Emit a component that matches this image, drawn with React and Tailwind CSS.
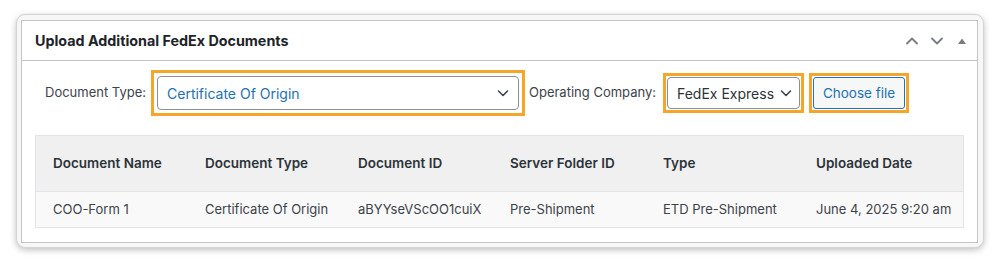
import React from 'react';

const cols = [
  { key: 'name', label: 'Document Name', w: 'w-[152px]' },
  { key: 'type', label: 'Document Type', w: 'w-[153px]' },
  { key: 'id', label: 'Document ID', w: 'w-[152px]' },
  { key: 'folder', label: 'Server Folder ID', w: 'w-[153px]' },
  { key: 'kind', label: 'Type', w: 'w-[153px]' },
  { key: 'date', label: 'Uploaded Date', w: 'flex-1' },
];

const rows = [
  {
    name: 'COO-Form 1',
    type: 'Certificate Of Origin',
    id: 'aBYYseVScOO1cuiX',
    folder: 'Pre-Shipment',
    kind: 'ETD Pre-Shipment',
    date: 'June 4, 2025 9:20 am',
  },
];

function Chevron({ className }) {
  return (
    <svg className={className} width="14" height="14" viewBox="0 0 14 14" fill="none">
      <path d="M2.5 5l4.5 4.5L11.5 5" stroke="currentColor" strokeWidth="1.6" strokeLinecap="round" strokeLinejoin="round" />
    </svg>
  );
}

function App() {
  return (
    <div className="w-[1000px] h-[263px] bg-white pt-[14px] pl-[16px] font-['Inter',sans-serif] text-[13px]">
      <div className="w-[968px] h-[234px] rounded-[9px] border border-[#d4d4d4] bg-[#f7f7f7] shadow-[0_2px_6px_rgba(0,0,0,0.25)] pt-[5px] pl-[4px]">
        <div className="w-[957px] h-[223px] bg-white border border-[#c3c4c7]">
          {/* header */}
          <div className="h-[40px] border-b border-[#c3c4c7] flex items-center pl-[13px] pr-[10px]">
            <h2 className="flex-1 font-bold text-[14.3px] text-[#1d2327]">Upload Additional FedEx Documents</h2>
            <div className="flex items-center text-[#787c82]">
              <svg width="16" height="16" viewBox="0 0 16 16" fill="none" className="mr-[9px]">
                <path d="M3 10.5L8 5.5l5 5" stroke="currentColor" strokeWidth="1.8" strokeLinecap="round" strokeLinejoin="round" />
              </svg>
              <svg width="16" height="16" viewBox="0 0 16 16" fill="none" className="mr-[12px]">
                <path d="M3 5.5L8 10.5l5-5" stroke="currentColor" strokeWidth="1.8" strokeLinecap="round" strokeLinejoin="round" />
              </svg>
              <svg width="10" height="10" viewBox="0 0 10 10">
                <path d="M1 8h8L5 2.5z" fill="currentColor" />
              </svg>
            </div>
          </div>

          {/* controls */}
          <div className="flex items-center h-[64px] pl-[23px]">
            <span className="text-[#3c434a] w-[106px]">Document Type:</span>
            <div className="border-[3px] border-[#f5a62a] p-[3px] h-[46px]">
              <div className="w-[362px] h-[34px] rounded-[4px] border border-[#8c8f94] flex items-center pl-[9px] pr-[8px] text-[14px]">
                <span className="flex-1 text-[#2271b1]">Certificate Of Origin</span>
                <Chevron className="text-[#3c434a]" />
              </div>
            </div>
            <span className="text-[#3c434a] ml-[4px] w-[134px]">Operating Company:</span>
            <div className="border-[3px] border-[#f5a62a] px-[1px] py-[1px] h-[40px]">
              <div className="w-[133px] h-[32px] rounded-[4px] border border-[#8c8f94] flex items-center pl-[9px] pr-[6px] text-[14px]">
                <span className="flex-1 text-[#2c3338]">FedEx Express</span>
                <Chevron className="text-[#3c434a]" />
              </div>
            </div>
            <div className="border-[3px] border-[#f5a62a] px-[1px] py-[1px] h-[40px] ml-[5px]">
              <div className="w-[92px] h-[32px] rounded-[3px] border border-[#2271b1] bg-[#f6f7f7] flex items-center justify-center text-[#2271b1] text-[13.5px]">
                Choose file
              </div>
            </div>
          </div>

          {/* table */}
          <div className="mx-[13px] mt-[10px] border border-[#e2e4e7]">
            <div className="flex h-[56px] items-center bg-[#f0f0f1] border-b border-[#e2e4e7]">
              {cols.map(c => (
                <div key={c.key} className={`${c.w} pl-[17px] font-semibold text-[13.5px] text-[#2c3338]`}>{c.label}</div>
              ))}
            </div>
            {rows.map((r, i) => (
              <div key={i} className="flex h-[35px] items-center bg-[#f9f9f9]">
                {cols.map(c => (
                  <div key={c.key} className={`${c.w} pl-[17px] text-[#3c434a]`}>{r[c.key]}</div>
                ))}
              </div>
            ))}
          </div>
        </div>
      </div>
    </div>
  );
}

export default App;
